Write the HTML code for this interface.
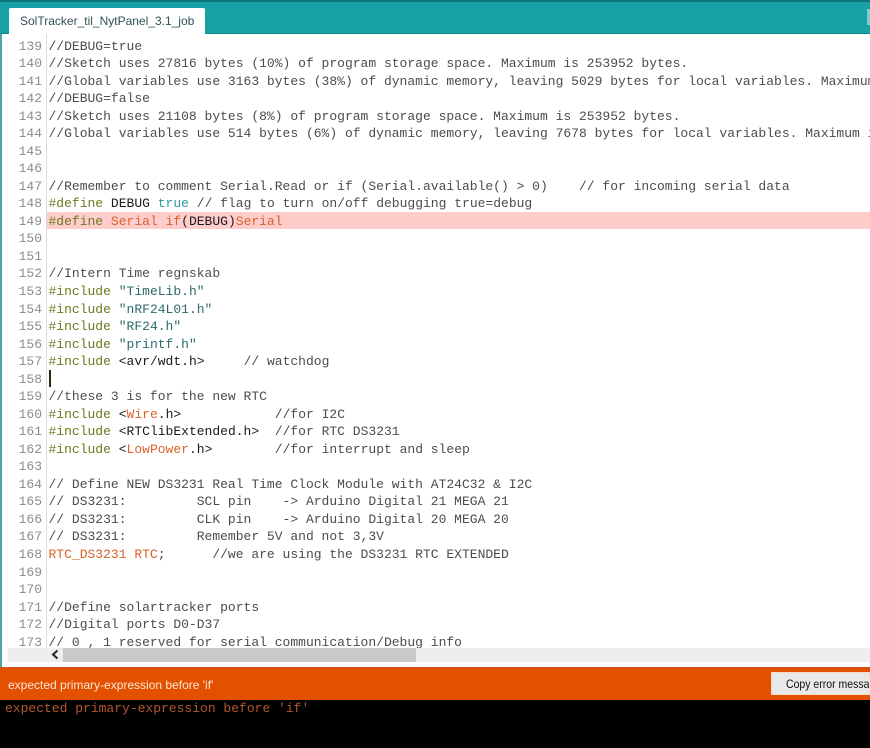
<!DOCTYPE html>
<html><head><meta charset="utf-8">
<style>
html,body{margin:0;padding:0;background:#fff}
#p{position:relative;width:870px;height:748px;overflow:hidden;background:#fff;font-family:"Liberation Sans",sans-serif}
.a{position:absolute}
#w{position:absolute;left:0;top:.5px;width:870px;height:647px;overflow:hidden}
.ln{position:absolute;left:0;width:42px;text-align:right;font:13px/17.5px "Liberation Mono",monospace;color:#8c8c8c;white-space:pre}
.c{position:absolute;left:48.5px;font:13px/17.5px "Liberation Mono",monospace;color:#4c4c4c;white-space:pre}
.g{color:#6b7a1e}.o{color:#d8622a}.t{color:#2a9a9e}.k{color:#1a1a1a}.s{color:#2c6a6c}
</style></head><body><div id="p">
<div class="a" style="left:0;top:0;width:870px;height:34px;background:#17a1a5"></div>
<div class="a" style="left:0;top:0;width:870px;height:2px;background:#0a7478"></div>
<div class="a" style="left:0;top:33px;width:870px;height:1px;background:#0f8a8e"></div>
<div class="a" style="left:9px;top:8px;width:196px;height:26px;background:#fff;border-radius:2px 2px 0 0;font-size:12px;line-height:26px;color:#2f5254;text-indent:11px;white-space:pre">SolTracker_til_NytPanel_3.1_job</div>
<div class="a" style="left:867px;top:9px;width:3px;height:16px;background:#7fcfd0"></div>
<div class="a" style="left:0;top:34px;width:2px;height:634px;background:#4aa7ab"></div>
<div class="a" style="left:46px;top:34px;width:1px;height:614px;background:#dcdcdc"></div>
<div class="a" style="left:47px;top:212px;width:823px;height:17px;background:#ffcccc"></div>
<div id="w">
<div class="ln" style="top:37px">139</div><div class="c" style="top:37px">//DEBUG=true</div>
<div class="ln" style="top:54.5px">140</div><div class="c" style="top:54.5px">//Sketch uses 27816 bytes (10%) of program storage space. Maximum is 253952 bytes.</div>
<div class="ln" style="top:72px">141</div><div class="c" style="top:72px">//Global variables use 3163 bytes (38%) of dynamic memory, leaving 5029 bytes for local variables. Maximum is 8192 bytes.</div>
<div class="ln" style="top:89.6px">142</div><div class="c" style="top:89.6px">//DEBUG=false</div>
<div class="ln" style="top:107.1px">143</div><div class="c" style="top:107.1px">//Sketch uses 21108 bytes (8%) of program storage space. Maximum is 253952 bytes.</div>
<div class="ln" style="top:124.6px">144</div><div class="c" style="top:124.6px">//Global variables use 514 bytes (6%) of dynamic memory, leaving 7678 bytes for local variables. Maximum is 8192 bytes.</div>
<div class="ln" style="top:142.2px">145</div>
<div class="ln" style="top:159.7px">146</div>
<div class="ln" style="top:177.2px">147</div><div class="c" style="top:177.2px">//Remember to comment Serial.Read or if (Serial.available() &gt; 0)    // for incoming serial data</div>
<div class="ln" style="top:194.8px">148</div><div class="c" style="top:194.8px"><span class="g">#define</span> <span class="k">DEBUG</span> <span class="t">true</span> // flag to turn on/off debugging true=debug</div>
<div class="ln" style="top:212.3px">149</div><div class="c" style="top:212.3px"><span class="g">#define</span> <span class="o">Serial</span> <span class="o">if</span><span class="k">(DEBUG)</span><span class="o">Serial</span></div>
<div class="ln" style="top:229.8px">150</div>
<div class="ln" style="top:247.4px">151</div>
<div class="ln" style="top:264.9px">152</div><div class="c" style="top:264.9px">//Intern Time regnskab</div>
<div class="ln" style="top:282.4px">153</div><div class="c" style="top:282.4px"><span class="g">#include</span> <span class="s">"TimeLib.h"</span></div>
<div class="ln" style="top:300px">154</div><div class="c" style="top:300px"><span class="g">#include</span> <span class="s">"nRF24L01.h"</span></div>
<div class="ln" style="top:317.5px">155</div><div class="c" style="top:317.5px"><span class="g">#include</span> <span class="s">"RF24.h"</span></div>
<div class="ln" style="top:335px">156</div><div class="c" style="top:335px"><span class="g">#include</span> <span class="s">"printf.h"</span></div>
<div class="ln" style="top:352.6px">157</div><div class="c" style="top:352.6px"><span class="g">#include</span> <span class="k">&lt;avr/wdt.h&gt;</span>     // watchdog</div>
<div class="ln" style="top:370.1px">158</div>
<div class="ln" style="top:387.6px">159</div><div class="c" style="top:387.6px">//these 3 is for the new RTC</div>
<div class="ln" style="top:405.2px">160</div><div class="c" style="top:405.2px"><span class="g">#include</span> <span class="k">&lt;</span><span class="o">Wire</span><span class="k">.h&gt;</span>            //for I2C</div>
<div class="ln" style="top:422.7px">161</div><div class="c" style="top:422.7px"><span class="g">#include</span> <span class="k">&lt;RTClibExtended.h&gt;</span>  //for RTC DS3231</div>
<div class="ln" style="top:440.2px">162</div><div class="c" style="top:440.2px"><span class="g">#include</span> <span class="k">&lt;</span><span class="o">LowPower</span><span class="k">.h&gt;</span>        //for interrupt and sleep</div>
<div class="ln" style="top:457.8px">163</div>
<div class="ln" style="top:475.3px">164</div><div class="c" style="top:475.3px">// Define NEW DS3231 Real Time Clock Module with AT24C32 &amp; I2C</div>
<div class="ln" style="top:492.8px">165</div><div class="c" style="top:492.8px">// DS3231:         SCL pin    -&gt; Arduino Digital 21 MEGA 21</div>
<div class="ln" style="top:510.4px">166</div><div class="c" style="top:510.4px">// DS3231:         CLK pin    -&gt; Arduino Digital 20 MEGA 20</div>
<div class="ln" style="top:527.9px">167</div><div class="c" style="top:527.9px">// DS3231:         Remember 5V and not 3,3V</div>
<div class="ln" style="top:545.4px">168</div><div class="c" style="top:545.4px"><span class="o">RTC_DS3231 RTC</span>;      //we are using the DS3231 RTC EXTENDED</div>
<div class="ln" style="top:563px">169</div>
<div class="ln" style="top:580.5px">170</div>
<div class="ln" style="top:598px">171</div><div class="c" style="top:598px">//Define solartracker ports</div>
<div class="ln" style="top:615.6px">172</div><div class="c" style="top:615.6px">//Digital ports D0-D37</div>
<div class="ln" style="top:633.1px">173</div><div class="c" style="top:633.1px">// 0 , 1 reserved for serial communication/Debug info</div>
</div>
<div class="a" style="left:49px;top:370px;width:2px;height:17px;background:#2a2a10"></div>
<div class="a" style="left:8px;top:648px;width:862px;height:14px;background:#eeeeee"></div>
<div class="a" style="left:63px;top:648px;width:353px;height:14px;background:#c9c9c9"></div>
<svg class="a" style="left:50px;top:649px" width="10" height="11" viewBox="0 0 10 11"><path d="M7.5 1.5 L3 5.5 L7.5 9.5" fill="none" stroke="#222" stroke-width="2"/></svg>
<div class="a" style="left:0;top:667px;width:870px;height:33px;background:#e25000"></div>
<div class="a" style="left:0;top:667px;width:870px;height:1px;background:#c8521a"></div>
<div class="a" style="left:8px;top:667px;height:33px;font-size:12px;line-height:37px;color:#ffe6d5;white-space:pre">expected primary-expression before 'if'</div>
<div class="a" style="left:771px;top:672px;width:99px;height:23px;background:#e9e9e9;border:1px solid #f7d9c4;box-sizing:border-box;overflow:hidden"><span style="position:absolute;left:14px;top:0;font-size:12px;line-height:22px;color:#111;white-space:pre;transform:scaleX(.875);transform-origin:0 0">Copy error messages</span></div>
<div class="a" style="left:0;top:700px;width:870px;height:48px;background:#000"></div>
<div class="a" style="left:5px;top:700px;font:13px/17px 'Liberation Mono',monospace;color:#b5572e;white-space:pre">expected primary-expression before 'if'</div>
</div></body></html>
